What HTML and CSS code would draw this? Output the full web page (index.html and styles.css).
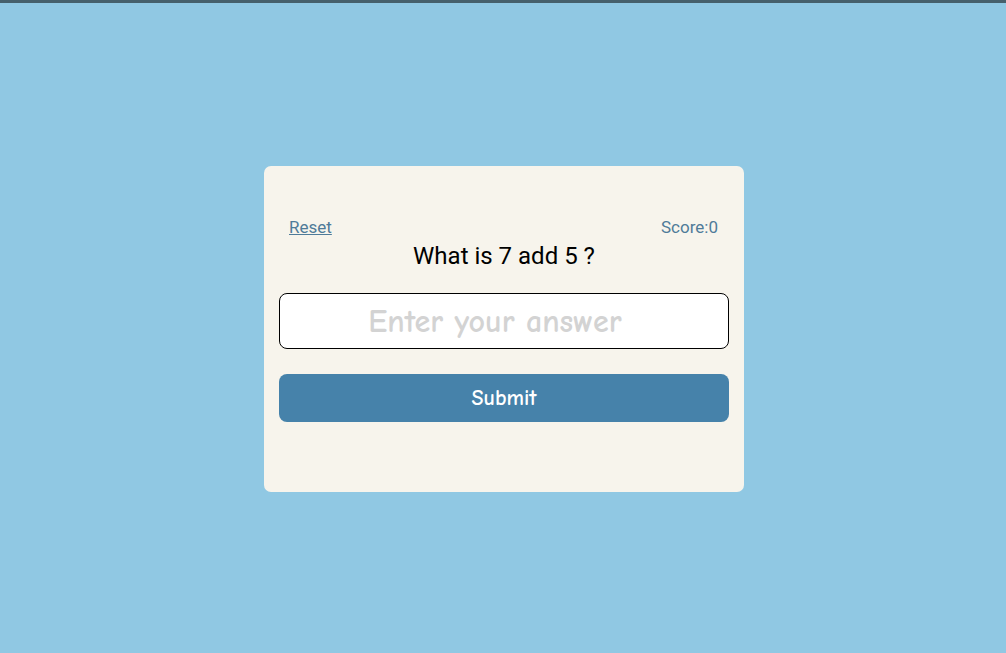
FILE: index.html
```html
<!DOCTYPE html>
<html lang="en">
<head>
<meta charset="utf-8">
<title>Math Quiz</title>
<link rel="stylesheet" href="styles.css">
</head>
<body>
<div class="page">
  <div class="card">
    <div class="header">
      <a href="#" class="reset">Reset</a>
      <span class="score">Score:0</span>
    </div>
    <h1 class="question">What is 7 add 5 ?</h1>
    <input class="answer" type="text" placeholder="Enter your answer">
    <button class="submit" type="button">Submit</button>
  </div>
</div>
</body>
</html>
```
FILE: styles.css
```css
html, body {
  margin: 0;
  padding: 0;
}
body {
  background: #90c8e3;
  font-family: Roboto, "Liberation Sans", sans-serif;
}
.page {
  border-top: 3px solid #46606c;
  min-height: 650px;
  display: flex;
  justify-content: center;
  align-items: flex-start;
  padding: 163px 0 0 2px;
  box-sizing: border-box;
}
.card {
  width: 480px;
  box-sizing: border-box;
  background: #f7f4ec;
  border-radius: 7px;
  padding: 52px 15px 70px;
  display: flex;
  flex-direction: column;
}
.header {
  display: flex;
  justify-content: space-between;
  padding: 0 11px 0 10px;
  font-size: 17px;
  line-height: 19px;
}
.reset {
  color: #4f7b99;
  text-decoration: underline;
}
.score {
  color: #4f7b99;
}
.question {
  margin: 6px 0 24px;
  font-size: 24px;
  font-weight: 400;
  line-height: 26px;
  text-align: center;
  color: #000;
}
.answer {
  height: 56px;
  box-sizing: border-box;
  border: 1px solid #000;
  border-radius: 8px;
  background: #fff;
  font-family: "Comic Sans MS", "Comic Neue", "DejaVu Sans", sans-serif;
  font-size: 32px;
  font-weight: 700;
  text-align: center;
  padding: 0 28px 0 10px;
  outline: none;
}
.answer::placeholder {
  color: #d3d3d3;
}
.submit {
  margin-top: 25px;
  height: 48px;
  border: none;
  border-radius: 8px;
  background: #4682aa;
  color: #fff;
  font-family: "Comic Sans MS", "Comic Neue", "DejaVu Sans", sans-serif;
  font-size: 22px;
  font-weight: 700;
  cursor: pointer;
}
```
